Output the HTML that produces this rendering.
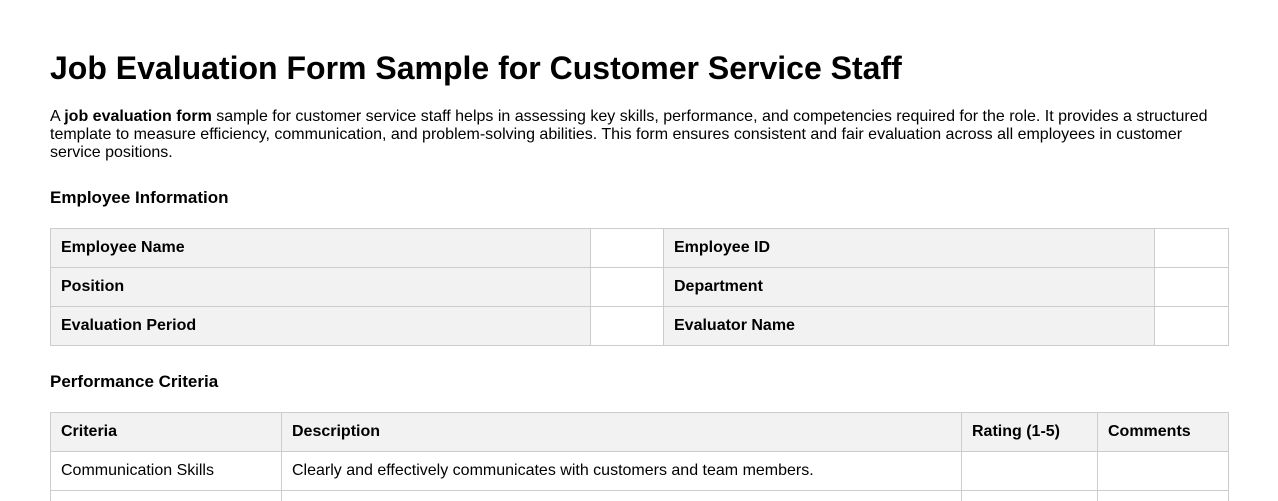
<!DOCTYPE html>
<html><head><meta charset="utf-8"><style>
html,body{margin:0;padding:0;height:501px;overflow:hidden}
body{font-family:"Liberation Sans",Arial,sans-serif;color:#000;background:#fff;width:1278px;position:relative}
h1{font-size:32px;margin:0;position:absolute;top:49px;left:50px;line-height:38px}
p{position:absolute;top:108px;left:50px;width:1178px;margin:0;font-size:16px;line-height:18px}
h2{position:absolute;left:50px;margin:0;font-size:17px;line-height:22px}
table{position:absolute;left:50px;width:1178px;border-collapse:collapse;font-size:16px;table-layout:fixed}
td,th{border:1px solid #ccc;height:39px;padding:0 10px;text-align:left;box-sizing:border-box}
.g{background:#f2f2f2;font-weight:bold}
tr.cut td{height:11px;border-bottom:none;padding:0;line-height:0}
</style></head><body>
<h1>Job Evaluation Form Sample for Customer Service Staff</h1>
<p>A <b>job evaluation form</b> sample for customer service staff helps in assessing key skills, performance, and competencies required for the role. It provides a structured template to measure efficiency, communication, and problem-solving abilities. This form ensures consistent and fair evaluation across all employees in customer service positions.</p>
<h2 style="top:187px">Employee Information</h2>
<table style="top:228px">
<colgroup><col style="width:540px"><col style="width:73px"><col style="width:491px"><col style="width:74px"></colgroup>
<tr><td class="g">Employee Name</td><td></td><td class="g">Employee ID</td><td></td></tr>
<tr><td class="g">Position</td><td></td><td class="g">Department</td><td></td></tr>
<tr><td class="g">Evaluation Period</td><td></td><td class="g">Evaluator Name</td><td></td></tr>
</table>
<h2 style="top:371px">Performance Criteria</h2>
<table style="top:412px">
<colgroup><col style="width:231px"><col style="width:680px"><col style="width:136px"><col style="width:131px"></colgroup>
<tr><td class="g">Criteria</td><td class="g">Description</td><td class="g">Rating (1-5)</td><td class="g">Comments</td></tr>
<tr><td>Communication Skills</td><td>Clearly and effectively communicates with customers and team members.</td><td></td><td></td></tr>
<tr class="cut"><td></td><td></td><td></td><td></td></tr>
</table>
</body></html>
